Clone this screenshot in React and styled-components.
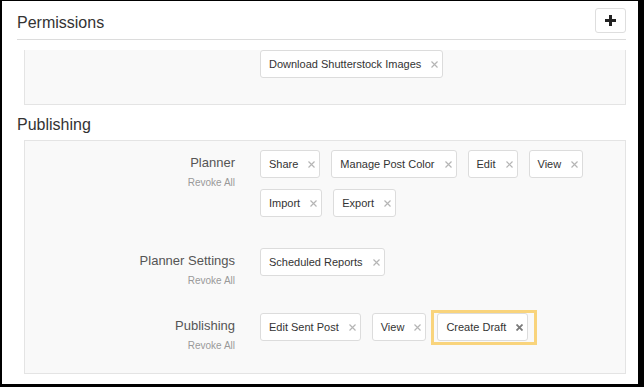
import React from "react";
import styled, { createGlobalStyle } from "styled-components";

const GlobalStyle = createGlobalStyle`
  html, body {
    margin: 0;
    padding: 0;
    background: #000;
  }
  body {
    font-family: "Liberation Sans", Arial, sans-serif;
    color: #333;
  }
`;

const Frame = styled.div`
  width: 636px;
  height: 383px;
  margin: 1px 6px 3px 2px;
  background: #fff;
  box-sizing: border-box;
  padding: 0 12px 0 15px;
  overflow: hidden;
`;

const Header = styled.div`
  display: flex;
  align-items: center;
  justify-content: space-between;
  padding: 7px 0 6px;
  border-bottom: 1px solid #dcdcdc;
`;

const Title = styled.h2`
  margin: 5px 0 0;
  font-size: 16px;
  line-height: 20px;
  font-weight: normal;
  color: #333;
`;

const AddButton = styled.button`
  width: 31px;
  height: 25px;
  padding: 0;
  display: flex;
  align-items: center;
  justify-content: center;
  background: #fff;
  border: 1px solid #dedede;
  border-radius: 3px;
  cursor: pointer;
`;

const SectionTitle = styled.h3`
  margin: 10px 0 5px;
  font-size: 16px;
  line-height: 20px;
  font-weight: normal;
  color: #333;
`;

const Box = styled.div`
  margin-left: 7px;
  background: #f9f9f9;
  border: 1px solid #e4e4e4;
  border-top: ${(p) => (p.$clipped ? "none" : "1px solid #e4e4e4")};
  padding: ${(p) => (p.$clipped ? "0 0 15px" : "9px 0 15px")};
`;

const BoxTop = styled(Box)`
  margin-top: 10px;
`;

const Row = styled.div`
  display: flex;
  margin-bottom: 20px;
  &:last-child {
    margin-bottom: 0;
  }
`;

const LabelCol = styled.div`
  width: 210px;
  flex-shrink: 0;
  margin-right: 25px;
  text-align: right;
  padding: ${(p) => (p.$empty ? "0" : "4px 0 5px")};
`;

const Label = styled.div`
  font-size: 13px;
  line-height: 18px;
  color: #555;
`;

const Revoke = styled.a`
  display: block;
  margin-top: 4px;
  font-size: 10px;
  line-height: 14px;
  color: #999;
  cursor: pointer;
`;

const Chips = styled.div`
  flex: 1;
  display: flex;
  flex-wrap: wrap;
  align-content: flex-start;
`;

const Chip = styled.div`
  position: relative;
  display: inline-flex;
  align-items: center;
  box-sizing: border-box;
  height: 28px;
  margin: 0 11px 11px 0;
  padding: 0 4px 0 8px;
  background: #fff;
  border: 1px solid #dcdcdc;
  border-radius: 3px;
  font-size: 11px;
  color: #333;
  white-space: nowrap;

  ${(p) =>
    p.$focused &&
    `
    &::after {
      content: "";
      position: absolute;
      left: -7px;
      right: -10px;
      top: -4px;
      bottom: -5px;
      border: 3px solid #f9d47c;
      pointer-events: none;
    }
  `}
`;

const Remove = styled.span`
  display: inline-flex;
  margin-left: 10px;
  color: ${(p) => (p.$dark ? "#7a7a7a" : "#b5b5b5")};
`;

const Cross = ({ dark }) => (
  <Remove $dark={dark}>
    <svg width="7" height="7" viewBox="0 0 7 7">
      <path
        d="M0.5 0.5 L6.5 6.5 M6.5 0.5 L0.5 6.5"
        stroke="currentColor"
        strokeWidth={dark ? 1.8 : 1.2}
      />
    </svg>
  </Remove>
);

const PlusIcon = () => (
  <svg width="11" height="11" viewBox="0 0 11 11">
    <rect x="4" y="0" width="3" height="11" fill="#222" />
    <rect x="0" y="4" width="11" height="3" fill="#222" />
  </svg>
);

const sections = [
  {
    name: "Planner",
    perms: ["Share", "Manage Post Color", "Edit", "View", "Import", "Export"],
  },
  { name: "Planner Settings", perms: ["Scheduled Reports"] },
  { name: "Publishing", perms: ["Edit Sent Post", "View", "Create Draft"] },
];

const PermRow = ({ name, perms }) => (
  <Row>
    <LabelCol>
      <Label>{name}</Label>
      <Revoke>Revoke All</Revoke>
    </LabelCol>
    <Chips>
      {perms.map((p) => {
        const focused = name === "Publishing" && p === "Create Draft";
        return (
          <Chip key={p} $focused={focused}>
            {p}
            <Cross dark={focused} />
          </Chip>
        );
      })}
    </Chips>
  </Row>
);

export default function App() {
  return (
    <>
      <GlobalStyle />
      <Frame>
        <Header>
          <Title>Permissions</Title>
          <AddButton aria-label="Add">
            <PlusIcon />
          </AddButton>
        </Header>

        <BoxTop $clipped>
          <Row>
            <LabelCol $empty />
            <Chips>
              <Chip>
                Download Shutterstock Images
                <Cross />
              </Chip>
            </Chips>
          </Row>
        </BoxTop>

        <SectionTitle>Publishing</SectionTitle>
        <Box>
          {sections.map((s) => (
            <PermRow key={s.name} {...s} />
          ))}
        </Box>
      </Frame>
    </>
  );
}
